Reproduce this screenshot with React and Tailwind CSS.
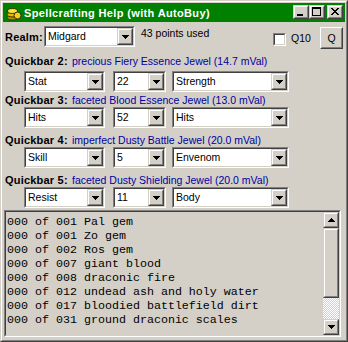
import React from 'react';

const bars = [
  { n: 2, jewel: 'precious Fiery Essence Jewel (14.7 mVal)', a: 'Stat', b: '22', c: 'Strength', lab: 'mt-[6px]', sel: 'mt-[3px]' },
  { n: 3, jewel: 'faceted Blood Essence Jewel (13.0 mVal)', a: 'Hits', b: '52', c: 'Hits', lab: 'mt-[2px]', sel: 'mt-0' },
  { n: 4, jewel: 'imperfect Dusty Battle Jewel (20.0 mVal)', a: 'Skill', b: '5', c: 'Envenom', lab: 'mt-[6px]', sel: 'mt-0' },
  { n: 5, jewel: 'faceted Dusty Shielding Jewel (20.0 mVal)', a: 'Resist', b: '11', c: 'Body', lab: 'mt-[6px]', sel: 'mt-0' },
];

const gems = [
  '000 of 001 Pal gem',
  '000 of 001 Zo gem',
  '000 of 002 Ros gem',
  '000 of 007 giant blood',
  '000 of 008 draconic fire',
  '000 of 012 undead ash and holy water',
  '000 of 017 bloodied battlefield dirt',
  '000 of 031 ground draconic scales',
];

function Sunken({ className = '', inner = '', children }) {
  return (
    <div className={`border border-t-[#808080] border-l-[#808080] border-b-white border-r-white ${className}`}>
      <div className={`h-full w-full border border-t-[#404040] border-l-[#404040] border-b-[#d4d0c8] border-r-[#d4d0c8] ${inner}`}>
        {children}
      </div>
    </div>
  );
}

function Raised({ className = '', children }) {
  return (
    <div className={`border border-t-[#d4d0c8] border-l-[#d4d0c8] border-b-[#404040] border-r-[#404040] bg-[#d4d0c8] ${className}`}>
      <div className="flex h-full w-full items-center justify-center border border-t-white border-l-white border-b-[#808080] border-r-[#808080]">
        {children}
      </div>
    </div>
  );
}

function Arrow({ up }) {
  return (
    <svg width="7" height="4" viewBox="0 0 7 4" shapeRendering="crispEdges">
      <path
        d={up ? 'M3 0h1v1H3zM2 1h3v1H2zM1 2h5v1H1zM0 3h7v1H0z' : 'M0 0h7v1H0zM1 1h5v1H1zM2 2h3v1H2zM3 3h1v1H3z'}
        fill="#000"
      />
    </svg>
  );
}

function Combo({ value, className = '' }) {
  return (
    <Sunken className={`h-[21px] ${className}`} inner="flex bg-white">
      <span className="flex-1 truncate pl-[2px] text-[10.5px] leading-[17px] text-black">{value}</span>
      <Raised className="h-[17px] w-[16px] shrink-0">
        <Arrow />
      </Raised>
    </Sunken>
  );
}

function TitleIcon() {
  return (
    <svg width="16" height="16" viewBox="0 0 16 16">
      <ellipse cx="7" cy="12.5" rx="6" ry="2.5" fill="#b89000" stroke="#3a3000" strokeWidth="1" />
      <ellipse cx="7" cy="9.5" rx="6" ry="2.5" fill="#e0c000" stroke="#3a3000" strokeWidth="1" />
      <ellipse cx="6.5" cy="6" rx="5" ry="2.5" fill="#f8e040" stroke="#3a3000" strokeWidth="1" />
      <circle cx="11.5" cy="10.5" r="3.5" fill="#f0d020" stroke="#3a3000" strokeWidth="1" />
    </svg>
  );
}

export default function App() {
  return (
    <div className="h-[342px] w-[348px] border border-t-[#d4d0c8] border-l-[#d4d0c8] border-b-[#404040] border-r-[#404040] bg-[#d4d0c8] font-['Liberation_Sans',Arial,sans-serif] text-black">
      <div className="flex h-full flex-col border border-t-white border-l-white border-b-[#808080] border-r-[#808080] p-[1px]">
        {/* title bar */}
        <div className="flex h-[19px] shrink-0 items-start bg-[#008000]">
          <div className="ml-[3px] mt-[2px]">
            <TitleIcon />
          </div>
          <span className="ml-[2px] mt-[4px] text-[11px] font-bold leading-[13px] tracking-[0.35px] text-white">
            Spellcrafting Help (with AutoBuy)
          </span>
          <div className="ml-auto mr-[2px] mt-[2px] flex">
            <Raised className="h-[14px] w-[16px]">
              <svg width="12" height="10" viewBox="0 0 12 10" shapeRendering="crispEdges">
                <path d="M2 7h6v2H2z" fill="#000" />
              </svg>
            </Raised>
            <Raised className="h-[14px] w-[16px]">
              <svg width="12" height="10" viewBox="0 0 12 10" shapeRendering="crispEdges">
                <path d="M1 0h9v2H1zM1 2h1v7H1zM9 2h1v7H9zM1 8h9v1H1z" fill="#000" />
              </svg>
            </Raised>
            <Raised className="ml-[2px] h-[14px] w-[16px]">
              <svg width="12" height="10" viewBox="0 0 12 10" shapeRendering="crispEdges">
                <path
                  d="M2 1h2v1H2zM8 1h2v1H8zM3 2h2v1H3zM7 2h2v1H7zM4 3h4v1H4zM5 4h2v1H5zM4 5h4v1H4zM3 6h2v1H3zM7 6h2v1H7zM2 7h2v1H2zM8 7h2v1H8z"
                  fill="#000"
                />
              </svg>
            </Raised>
          </div>
        </div>

        {/* realm row */}
        <div className="mt-[4px] flex h-[23px] shrink-0 items-start">
          <span className="ml-[2px] mt-[5px] w-[39px] text-[11px] font-bold leading-[13px] tracking-[0.2px]">Realm:</span>
          <Combo value="Midgard" className="w-[91px]" />
          <span className="ml-[6px] mt-[1px] text-[10.5px] leading-[13px]">43 points used</span>
          <div className="ml-auto flex items-start">
            <Sunken className="mt-[7px] h-[13px] w-[13px]" inner="bg-white" />
            <span className="ml-[5px] mt-[6px] w-[29px] text-[10.5px] leading-[13px]">Q10</span>
            <div className="mr-[2px] mt-[1px] h-[22px] w-[23px] border border-t-white border-l-white border-b-[#404040] border-r-[#404040]">
              <div className="flex h-full w-full items-center justify-center border border-t-[#d4d0c8] border-l-[#d4d0c8] border-b-[#808080] border-r-[#808080] text-[10.5px] leading-[13px]">
                Q
              </div>
            </div>
          </div>
        </div>

        {/* quickbars */}
        {bars.map(bar => (
          <div key={bar.n} className="shrink-0">
            <div className={`flex items-baseline leading-[13px] ${bar.lab}`}>
              <span className="ml-[2px] w-[67px] text-[11px] font-bold tracking-[0.2px]">Quickbar {bar.n}:</span>
              <span className="text-[10.5px] text-[#0000a0]">{bar.jewel}</span>
            </div>
            <div className={`ml-[21px] flex ${bar.sel}`}>
              <Combo value={bar.a} className="w-[81px]" />
              <Combo value={bar.b} className="ml-[8px] w-[53px]" />
              <Combo value={bar.c} className="ml-[6px] w-[117px]" />
            </div>
          </div>
        ))}

        {/* gem list */}
        <Sunken className="ml-[1px] mt-[2px] h-[127px] w-[337px] shrink-0" inner="flex bg-[#d4d0c8]">
          <div className="flex-1 pl-[1px] pt-[3px] font-['Liberation_Mono','Courier_New',monospace] text-[11.67px] leading-[14px] whitespace-pre">
            {gems.map(g => (
              <div key={g}>{g}</div>
            ))}
          </div>
          <div className="flex w-[16px] shrink-0 flex-col">
            <Raised className="h-[16px] w-[16px]">
              <Arrow up />
            </Raised>
            <Raised className="h-[70px] w-[16px]" />
            <div className="h-[21px] w-[16px] bg-[image:repeating-conic-gradient(#ffffff_0_25%,#d4d0c8_0_50%)] bg-[length:2px_2px]" />
            <Raised className="h-[16px] w-[16px]">
              <Arrow />
            </Raised>
          </div>
        </Sunken>
      </div>
    </div>
  );
}
